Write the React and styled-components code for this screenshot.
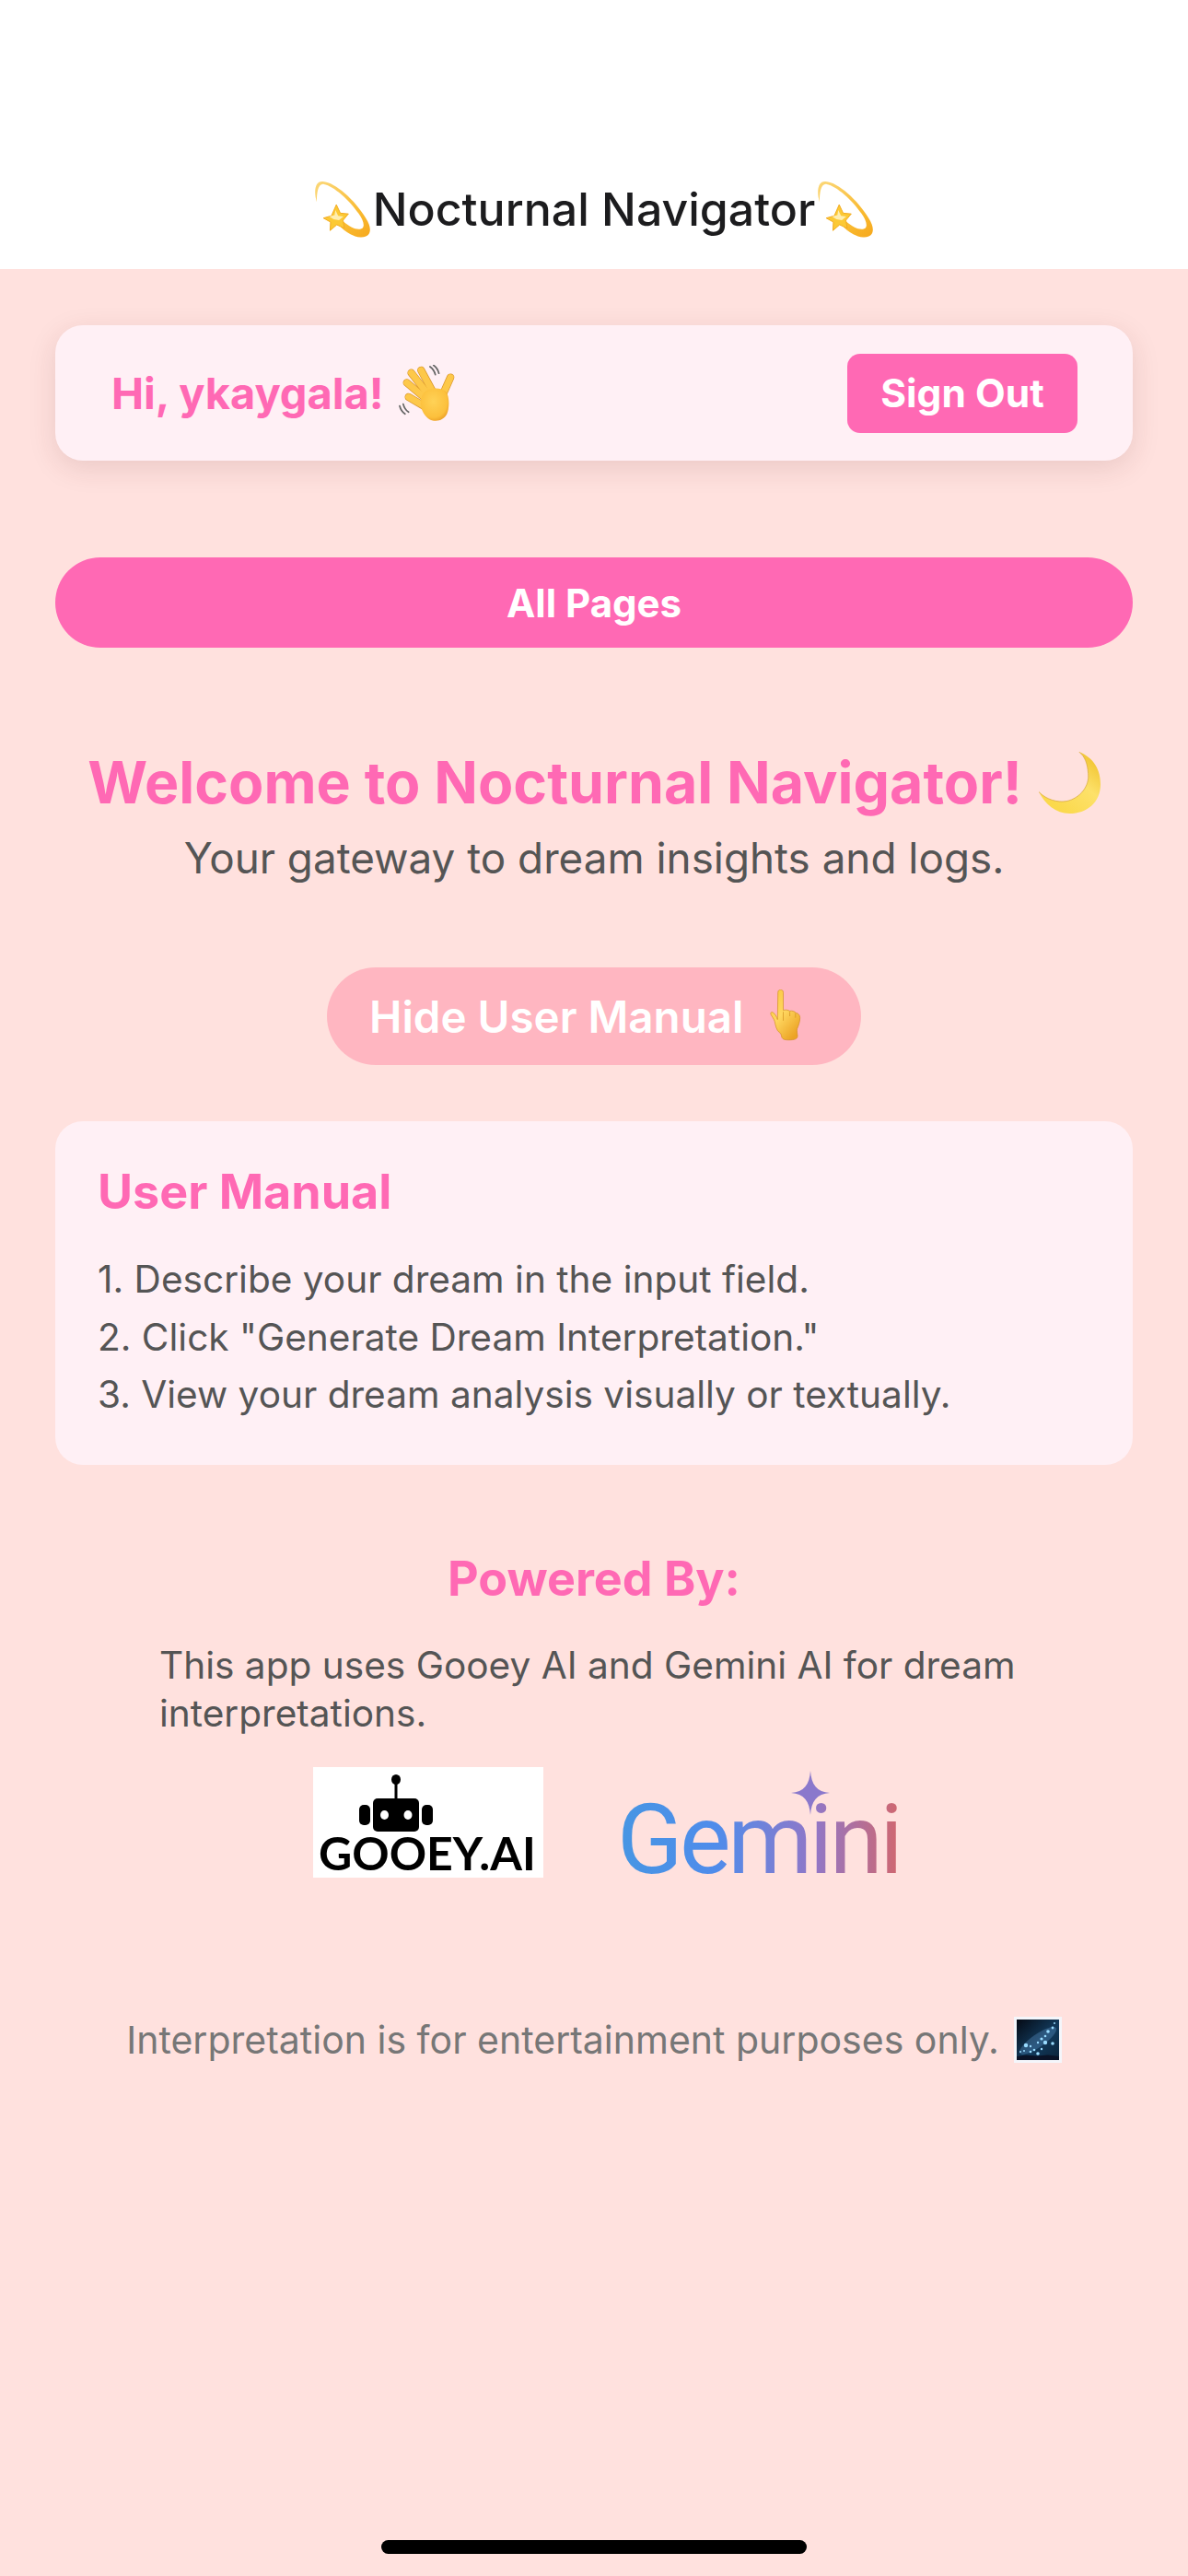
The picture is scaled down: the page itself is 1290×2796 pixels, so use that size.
import React from "react";
import styled, { createGlobalStyle } from "styled-components";

const GlobalStyle = createGlobalStyle`
  html, body {
    margin: 0;
    padding: 0;
    background: #ffe1de;
  }
  * {
    box-sizing: border-box;
  }
`;

const Screen = styled.div`
  position: relative;
  width: 1290px;
  height: 2796px;
  overflow: hidden;
  background: #ffe1de;
  font-family: Inter, "Liberation Sans", sans-serif;
  color: #555;
`;

const NavBar = styled.header`
  height: 292px;
  background: #fff;
  display: flex;
  align-items: flex-end;
  justify-content: center;
  padding-bottom: 33px;
`;

const NavTitle = styled.h1`
  margin: 0;
  display: flex;
  align-items: center;
  gap: 2px;
  font-size: 50px;
  line-height: 62px;
  font-weight: 500;
  color: #1c1c1e;
`;

const Content = styled.main`
  padding: 61px 60px 0;
  display: flex;
  flex-direction: column;
`;

const UserCard = styled.section`
  height: 147px;
  padding: 0 60px 0 61px;
  display: flex;
  align-items: center;
  justify-content: space-between;
  background: #fff0f5;
  border-radius: 30px;
  box-shadow: 0 8px 30px rgba(90, 40, 40, 0.13);
`;

const Greeting = styled.div`
  display: flex;
  align-items: center;
  gap: 16px;
  font-size: 47px;
  font-weight: 700;
  color: #ff69b4;
`;

const SignOut = styled.button`
  width: 250px;
  height: 86px;
  border: 0;
  border-radius: 14px;
  background: #ff69b4;
  color: #fff;
  font: 700 42.5px Inter, "Liberation Sans", sans-serif;
`;

const AllPages = styled.button`
  margin-top: 105px;
  height: 98px;
  border: 0;
  border-radius: 49px;
  background: #ff69b4;
  color: #fff;
  font: 700 42px Inter, "Liberation Sans", sans-serif;
`;

const Welcome = styled.div`
  margin-top: 105px;
  text-align: center;
`;

const WelcomeTitle = styled.h2`
  margin: 0;
  display: flex;
  align-items: center;
  justify-content: center;
  gap: 18px;
  font-size: 62.600px;
  line-height: 82px;
  font-weight: 700;
  color: #ff69b4;
`;

const WelcomeSub = styled.p`
  margin: 10px 0 0;
  font-size: 45.800px;
  line-height: 64px;
  color: #555;
`;

const ManualToggle = styled.button`
  align-self: center;
  margin-top: 86px;
  width: 580px;
  height: 106px;
  padding: 0 0 0 46px;
  border: 0;
  border-radius: 53px;
  background: #ffb6c1;
  color: #fff;
  font: 600 47.500px Inter, "Liberation Sans", sans-serif;
  display: flex;
  align-items: center;
  justify-content: flex-start;
  gap: 24px;
`;

const ManualCard = styled.section`
  margin-top: 61px;
  height: 373px;
  padding: 44px 46px 0;
  background: #fff0f5;
  border-radius: 30px;
`;

const SectionTitle = styled.h3`
  margin: 0;
  font-size: 52px;
  line-height: 66px;
  font-weight: 700;
  color: #ff69b4;
  text-align: ${(p) => p.$align || "left"};
`;

const Steps = styled.ol`
  margin: 31px 0 0;
  padding: 0;
  list-style: none;
`;

const Step = styled.li`
  font-size: 40.600px;
  line-height: 62.500px;
  color: #555;
`;

const Powered = styled.section`
  margin-top: 91px;
  display: flex;
  flex-direction: column;
`;

const PoweredText = styled.p`
  margin: 35px 0 0;
  padding: 0 113px;
  font-size: 40.600px;
  line-height: 52px;
  color: #555;
`;

const Logos = styled.div`
  margin-top: 32px;
  padding-left: 26px;
  display: flex;
  justify-content: center;
  align-items: flex-start;
  gap: 84px;
`;

const GooeyLogo = styled.div`
  width: 250px;
  height: 120px;
  background: #fff;
  display: flex;
  flex-direction: column;
  align-items: flex-start;
`;

const GooeyRobot = styled.svg`
  width: 80px;
  height: 62px;
  margin: 8px 0 0 50px;
  flex: none;
`;

const GooeyWord = styled.span`
  margin: 0 0 0 6px;
  font-family: Lato, Inter, sans-serif;
  font-size: 50px;
  line-height: 46px;
  font-weight: 700;
  color: #000;
  white-space: nowrap;
`;

const GeminiLogo = styled.div`
  position: relative;
  width: 302px;
  height: 120px;
`;

const GeminiWord = styled.span`
  display: inline-block;
  margin: 18px 0 0 -4px;
  font-family: Roboto, Inter, sans-serif;
  font-size: 105px;
  line-height: 124px;
  font-weight: 400;
  letter-spacing: -3.500px;
  white-space: nowrap;
  background: linear-gradient(90deg, #4796e3 0%, #4f8ceb 35%, #9177c7 70%, #d0676f 100%);
  -webkit-background-clip: text;
  background-clip: text;
  color: transparent;
`;

const GeminiSpark = styled.svg`
  position: absolute;
  left: 185px;
  top: 4px;
  width: 42px;
  height: 48px;
`;

const Disclaimer = styled.p`
  margin: 148px 0 0;
  display: flex;
  align-items: center;
  justify-content: center;
  gap: 16px;
  font-size: 41px;
  line-height: 56px;
  color: #777;
`;

const HomeBar = styled.div`
  position: absolute;
  left: 414px;
  bottom: 24px;
  width: 462px;
  height: 15px;
  border-radius: 8px;
  background: #000;
`;

const EmojiSvg = styled.svg`
  width: ${(p) => p.$w}px;
  height: ${(p) => p.$h}px;
  flex: none;
  display: block;
`;

const Dizzy = ({ id }) => (
  <EmojiSvg $w={62} $h={64} viewBox="0 0 64 64">
    <defs>
      <linearGradient id={id} x1="0" y1="0" x2="1" y2="1">
        <stop offset="0" stopColor="#fbd87a" />
        <stop offset="0.7" stopColor="#f9b92e" />
        <stop offset="1" stopColor="#f6a81d" />
      </linearGradient>
    </defs>
    <path
      d="M3 24C-1 10 2 0 10 1c14 1 36 21 48 41 8 12 6 22-6 21.500-8-.5-16-5.500-22-11.500l3-6c7 6 15 10 20 8 5-2 2-10-3-17C40 22 22 6 11 4 5 3 3 12 3 24Z"
      fill={`url(#${id})`}
    />
    <path
      d="M25 27l4.500 9.500 9 .8-6 7.200 1.500 9-8.500-4-7.500 6.500.5-9.500-8-4.500 9-2.500z"
      fill="#fcc934"
      stroke="#f2a91f"
      strokeWidth="1"
      strokeLinejoin="round"
    />
    <path d="M24 33l3 6.500 6 .8-5 4-6-1-5-3 6-1.500z" fill="#ffeeb0" />
  </EmojiSvg>
);

const handFingers = [
  "M25 6L38 30",
  "M14 9L32 32",
  "M9 20L28 36",
  "M11 36L28 46",
  "M58 14L50 32",
];

const WaveHand = () => (
  <EmojiSvg $w={62} $h={62} viewBox="0 0 64 64">
    <defs>
      <radialGradient id="hand" cx="0.45" cy="0.4" r="0.7">
        <stop offset="0" stopColor="#ffd257" />
        <stop offset="0.7" stopColor="#fcc03c" />
        <stop offset="1" stopColor="#e5921c" />
      </radialGradient>
    </defs>
    <g fill="none" stroke="#666" strokeWidth="1.800" strokeLinecap="round">
      <path d="M35 2c3 2 5 5 6 9" />
      <path d="M39 0.500c3 2 5 5 6 9" />
      <path d="M1 46c1 4 3 7 6 9" />
      <path d="M5 44c1 4 3 7 6 9" />
    </g>
    <g fill="none" strokeLinecap="round">
      {handFingers.map((d) => (
        <path key={d} d={d} stroke="#d9952a" strokeWidth="8.600" />
      ))}
      {handFingers.map((d) => (
        <path key={d} d={d} stroke="#fdc84a" strokeWidth="7.200" />
      ))}
    </g>
    <path
      d="M27 33C31 26 45 24 53 30 57 36 57 48 54 55 50 63 40 65 33 60 25 54 22 42 27 33Z"
      fill="url(#hand)"
    />
  </EmojiSvg>
);

const Moon = () => (
  <EmojiSvg $w={67} $h={67} viewBox="0 0 200 200">
    <defs>
      <linearGradient id="moon" x1="0.3" y1="0.9" x2="0.9" y2="0.2">
        <stop offset="0" stopColor="#fbd94c" />
        <stop offset="0.6" stopColor="#fde16a" />
        <stop offset="1" stopColor="#f3c93a" />
      </linearGradient>
    </defs>
    <path
      d="M130 0C180 20 200 60 200 105 200 165 155 200 100 200 55 200 20 170 0 130 25 155 60 165 90 160 135 150 165 110 160 70 158 40 150 15 130 0Z"
      fill="url(#moon)"
    />
    <path
      d="M0 130C25 155 60 165 90 160 135 150 165 110 160 70 158 40 150 15 130 0"
      fill="none"
      stroke="#d3a437"
      strokeWidth="2"
    />
  </EmojiSvg>
);

const PointUp = () => (
  <EmojiSvg $w={39} $h={58} viewBox="0 0 44 72" preserveAspectRatio="none">
    <defs>
      <linearGradient id="point" x1="0" y1="0" x2="0.7" y2="1">
        <stop offset="0" stopColor="#fbc63e" />
        <stop offset="0.5" stopColor="#ffd760" />
        <stop offset="1" stopColor="#eca324" />
      </linearGradient>
    </defs>
    <path
      d="M15.500 4c0-5 6.500-5 6.500 0v24c3-1 6-.5 8 1 3-.7 6 .5 7.500 2.500 3 .5 5 3 5 6.500 0 6-2 11-3.500 15-.5 2 0 6 .5 9 .3 5-4 6-11 6-4 0-7-.5-8-3-1-2-.5-5-3-7-4-3-5-10-6-15-.7-3-3-6-4.500-9-1-2 0-4 1.500-3.500 3 1 6 7 6.500 10z"
      fill="url(#point)"
      stroke="#d18e1e"
      strokeWidth="0.800"
      strokeLinejoin="round"
    />
    <path d="M22 30v12M30 30v6M37 32v6" stroke="#d18e1e" strokeWidth="0.800" fill="none" />
  </EmojiSvg>
);

const skyStars = [
  [44, 7, 1], [42, 12, 1.400], [37, 16, 1.800], [34, 21, 1.300], [30, 24, 1.600], [34, 28, 2.200],
  [42, 29, 1.800], [26, 28, 1.200], [18, 32, 1.200], [13, 31, 2.200], [22, 36, 1.300], [30, 35, 1.200],
  [26, 40, 1.800], [18, 38, 1.300], [11, 37, 1], [7, 38, 1],
];

const MilkyWay = () => (
  <EmojiSvg $w={52} $h={50} viewBox="0 0 52 50">
    <defs>
      <linearGradient id="sky" x1="0" y1="0" x2="1" y2="1">
        <stop offset="0" stopColor="#050a14" />
        <stop offset="0.55" stopColor="#123a5c" />
        <stop offset="1" stopColor="#0b2238" />
      </linearGradient>
    </defs>
    <rect width="52" height="50" fill="#f4f6fb" />
    <rect x="3" y="3" width="46" height="44" fill="url(#sky)" />
    <ellipse cx="26" cy="26" rx="24" ry="7" transform="rotate(-35 26 26)" fill="#5f96c8" opacity="0.35" />
    <path d="M3 43l10-1.500 12 1 12-1 12 1.500v4H3z" fill="#0a1226" />
    {skyStars.map(([x, y, r]) => (
      <circle key={`${x}-${y}`} cx={x} cy={y} r={r} fill="#9adcff" />
    ))}
  </EmojiSvg>
);

const App = () => (
  <Screen>
    <GlobalStyle />
    <NavBar>
      <NavTitle>
        <Dizzy id="dizzyA" />
        Nocturnal Navigator
        <Dizzy id="dizzyB" />
      </NavTitle>
    </NavBar>
    <Content>
      <UserCard>
        <Greeting>
          Hi, ykaygala!
          <WaveHand />
        </Greeting>
        <SignOut>Sign Out</SignOut>
      </UserCard>
      <AllPages>All Pages</AllPages>
      <Welcome>
        <WelcomeTitle>
          Welcome to Nocturnal Navigator!
          <Moon />
        </WelcomeTitle>
        <WelcomeSub>Your gateway to dream insights and logs.</WelcomeSub>
      </Welcome>
      <ManualToggle>
        Hide User Manual
        <PointUp />
      </ManualToggle>
      <ManualCard>
        <SectionTitle>User Manual</SectionTitle>
        <Steps>
          <Step>1. Describe your dream in the input field.</Step>
          <Step>2. Click "Generate Dream Interpretation."</Step>
          <Step>3. View your dream analysis visually or textually.</Step>
        </Steps>
      </ManualCard>
      <Powered>
        <SectionTitle $align="center">Powered By:</SectionTitle>
        <PoweredText>This app uses Gooey AI and Gemini AI for dream interpretations.</PoweredText>
        <Logos>
          <GooeyLogo>
            <GooeyRobot viewBox="0 0 80 62">
              <ellipse cx="40" cy="5.500" rx="5" ry="5.500" fill="#000" />
              <rect x="38.500" y="8" width="3" height="18" fill="#000" />
              <rect x="15" y="26" width="50" height="36" rx="5" fill="#000" />
              <rect x="0" y="33" width="12" height="22" rx="5" fill="#000" />
              <rect x="68" y="33" width="12" height="22" rx="5" fill="#000" />
              <ellipse cx="27.500" cy="44" rx="4.500" ry="5" fill="#fff" />
              <ellipse cx="53" cy="44" rx="4.500" ry="5" fill="#fff" />
            </GooeyRobot>
            <GooeyWord>GOOEY.AI</GooeyWord>
          </GooeyLogo>
          <GeminiLogo>
            <GeminiWord>Gemini</GeminiWord>
            <GeminiSpark viewBox="0 0 42 44" preserveAspectRatio="none">
              <path d="M21 0C22 14 28 21 42 22 28 23 22 30 21 44 20 30 14 23 0 22 14 21 20 14 21 0Z" fill="#8a78cc" />
            </GeminiSpark>
          </GeminiLogo>
        </Logos>
      </Powered>
      <Disclaimer>
        Interpretation is for entertainment purposes only.
        <MilkyWay />
      </Disclaimer>
    </Content>
    <HomeBar />
  </Screen>
);

export default App;
